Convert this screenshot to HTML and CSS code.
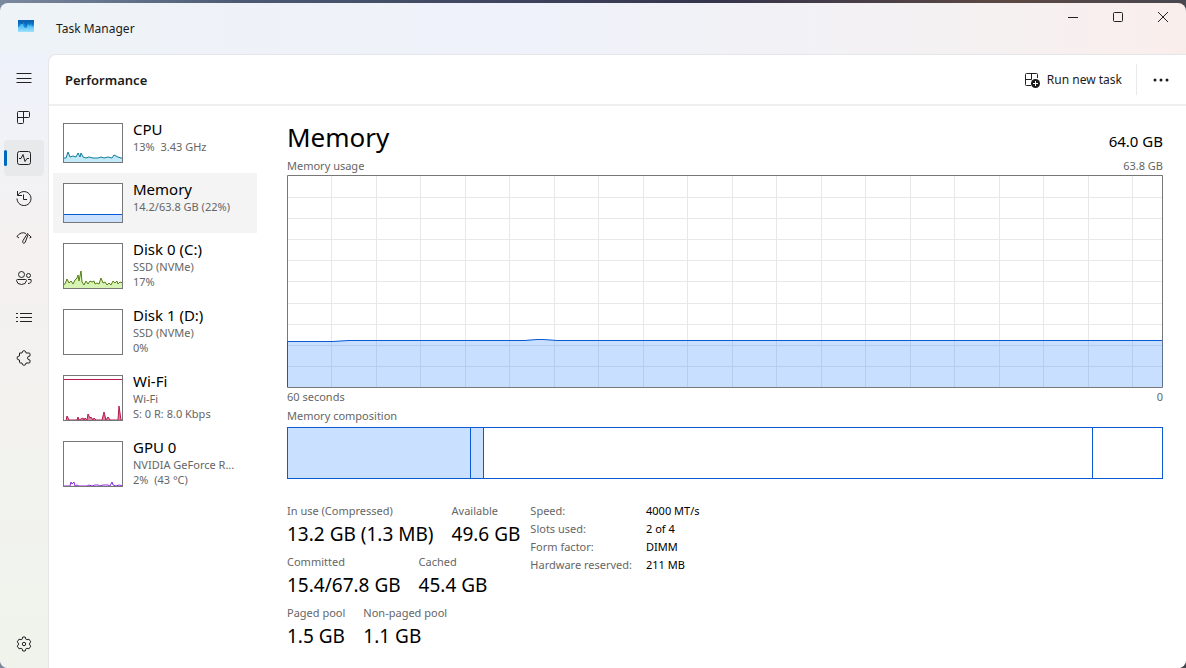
FILE: index.html
```html
<!DOCTYPE html>
<html lang="en">
<head>
<meta charset="utf-8">
<title>Task Manager</title>
<link rel="stylesheet" href="styles.css">
</head>
<body>
<div class="window">
  <header class="titlebar">
    <svg class="app-icon" width="16" height="12" viewBox="0 0 16 12" aria-hidden="true">
      <defs><linearGradient id="sky" x1="0" y1="0" x2="0" y2="1"><stop offset="0" stop-color="#35b3f0"/><stop offset="1" stop-color="#a0e2fd"/></linearGradient></defs>
      <rect width="16" height="12" fill="#0b64b4"/>
      <path d="M0 5 2 3 4 5 5 2 7 4 8 6 10 2 11 5 13 2 14 5 16 2V12H0Z" fill="#1687d4"/>
      <path d="M0 7 2 6 3 4 5 4 6 7 8 8 9 7 10 4 12 6 13 4 14 7 16 5V12H0Z" fill="url(#sky)"/>
    </svg>
    <h1 class="app-name">Task Manager</h1>
    <div class="caption-buttons">
      <button class="caption" aria-label="Minimize"><svg width="12" height="12" viewBox="0 0 12 12"><path d="M1 6.500H11"/></svg></button>
      <button class="caption" aria-label="Maximize"><svg width="12" height="12" viewBox="0 0 12 12"><rect x="1.500" y="1.500" width="9" height="9" rx="1"/></svg></button>
      <button class="caption" aria-label="Close"><svg width="12" height="12" viewBox="0 0 12 12"><path d="M1 1 11 11M11 1 1 11"/></svg></button>
    </div>
  </header>
  <div class="body">
    <nav class="rail" aria-label="Pages">
      <button class="rail-button" aria-label="Open navigation"><svg width="16" height="16" viewBox="0 0 16 16"><path d="M.5 3.500H15.500M.5 8.500H15.500M.5 12.500H15.500"/></svg></button>
      <button class="rail-button" aria-label="Processes"><svg width="16" height="16" viewBox="0 0 16 16"><path d="M2.500 1.500H12.500Q13.500 1.500 13.500 2.500V6.500Q13.500 7.500 12.500 7.500H1.500M7.500 1.500V12.500Q7.500 13.500 6.500 13.500H2.500Q1.500 13.500 1.500 12.500V2.500Q1.500 1.500 2.500 1.500"/></svg></button>
      <button class="rail-button active" aria-label="Performance" aria-current="page"><svg width="16" height="16" viewBox="0 0 16 16"><rect x="1.500" y="1.500" width="13" height="13" rx="2"/><path d="M3 8.500H5L7 4.500 9 11.500 11 8.500H13"/></svg></button>
      <button class="rail-button" aria-label="App history"><svg width="16" height="16" viewBox="0 0 16 16"><path d="M1.500 1V5.500H6M1.800 5.300A7 7 0 1 1 1 8.500M7.500 4.500V9.500H11"/></svg></button>
      <button class="rail-button" aria-label="Startup apps"><svg width="16" height="16" viewBox="0 0 16 16"><path d="M.8 6.600Q5 1 10 3.500M1 6.500 3 8M13 5 15.200 7.200 13.500 8M11.500 3.500 7 10.500Q6 13 7.700 13.300 9.200 13.300 9.700 11L12.300 4Z"/></svg></button>
      <button class="rail-button" aria-label="Users"><svg width="16" height="16" viewBox="0 0 16 16"><circle cx="5.500" cy="4.500" r="3"/><circle cx="12.500" cy="5.500" r="2"/><path d="M1.500 9.500H9.500Q10.500 9.500 10.500 10.500 10 14.500 5.500 14.500 1 14.500.5 10.500.5 9.500 1.500 9.500ZM12 9.500H15Q16 13.500 12 13.500"/></svg></button>
      <button class="rail-button" aria-label="Details"><svg width="16" height="16" viewBox="0 0 16 16"><path d="M4 3.500H16M4 7.500H16M4 11.500H16M0 3.500H2M0 7.500H2M0 11.500H2"/></svg></button>
      <button class="rail-button" aria-label="Services"><svg width="16" height="16" viewBox="0 0 16 16"><path d="M3.500 3H6Q6 .7 8 .7T10 3H13Q14 3 14 4V6Q11.500 6 11.500 8T14 10V12Q14 13 13 13H10Q10 15.300 8 15.300T6 13H4.500Q3.500 13 3.500 12V10Q1 10 1 8T3.500 6Z"/></svg></button>
      <button class="rail-button settings" aria-label="Settings"><svg width="16" height="16" viewBox="0 0 16 16"><path d="M6.800 1H9.200L9.800 3.100 10.900 3.700 13 3.200 14.700 5.800 13.300 8 14.700 10.200 13 12.800 10.900 12.300 9.800 12.900 9.200 15H6.800L6.200 12.900 5.100 12.300 3 12.800 1.300 10.200 2.700 8 1.300 5.800 3 3.200 5.100 3.700 6.200 3.100Z" stroke-linejoin="round"/><circle cx="8" cy="8" r="1.700"/></svg></button>
    </nav>
    <main class="panel">
      <div class="toolbar">
        <h2 class="page-title">Performance</h2>
        <button class="run-task">
          <svg width="16" height="16" viewBox="0 0 16 16"><path d="M7 13.500H2.500Q1.500 13.500 1.500 12.500V2.500Q1.500 1.500 2.500 1.500H12.500Q13.500 1.500 13.500 2.500V6M7.500 1.500V7.500M1.500 7.500H7.500"/><circle class="solid" cx="11.500" cy="11.500" r="4.500"/><path class="plus" d="M11.500 9V14M9 11.500H14"/></svg>
          <span>Run new task</span>
        </button>
        <button class="more" aria-label="See more"><svg width="16" height="4" viewBox="0 0 16 4"><circle cx="2" cy="2" r="1.500"/><circle cx="8" cy="2" r="1.500"/><circle cx="14" cy="2" r="1.500"/></svg></button>
      </div>
      <div class="content">
        <div class="devices">
          <button class="device">
            <svg class="thumb short cpu" viewBox="0 0 60 40"><path d="M0 35H3L5 29 7 34 10 33 13 34 15 30 17 34 18 30 20 34 23 35 26 34 30 35 35 35 38 34 41 35 45 34 49 35 51 32 53 33 55 34 58 35H60V40H0Z"/></svg>
            <span class="device-text"><span class="device-name">CPU</span><span>13%&nbsp; 3.43 GHz</span></span>
          </button>
          <button class="device selected">
            <svg class="thumb short mem" viewBox="0 0 60 40"><path d="M0.500 31.500H60V40H.5Z"/></svg>
            <span class="device-text"><span class="device-name">Memory</span><span>14.2/63.8 GB (22%)</span></span>
          </button>
          <button class="device">
            <svg class="thumb disk" viewBox="0 0 60 46"><path d="M0 42 2 41 4 36 6 40 8 38 10 41 12 37 14 35 15 32 16 38 18 28 19 39 21 42 23 38 25 41 27 38 29 39 31 38 32 41 34 40 36 41 38 35 40 40 42 39 44 42 46 40 48 42 50 38 52 40 54 38 55 41 57 39 60 40V46H0Z"/></svg>
            <span class="device-text"><span class="device-name">Disk 0 (C:)</span><span>SSD (NVMe)</span><span>17%</span></span>
          </button>
          <button class="device">
            <svg class="thumb" viewBox="0 0 60 46"></svg>
            <span class="device-text"><span class="device-name">Disk 1 (D:)</span><span>SSD (NVMe)</span><span>0%</span></span>
          </button>
          <button class="device">
            <svg class="thumb wifi" viewBox="0 0 60 46"><path class="limit" d="M1 4.500H59"/><path class="traffic" d="M0 46H3L4 41 6 45H14L15 42 16 45 18 44 20 43 21 45 22 43 24 45 25 39 27 43 28 42 30 45 31 43 33 45H39L41 37 43 45 45 42 47 45H55L56 31 58 45H60"/></svg>
            <span class="device-text"><span class="device-name">Wi-Fi</span><span>Wi-Fi</span><span>S: 0 R: 8.0 Kbps</span></span>
          </button>
          <button class="device">
            <svg class="thumb gpu" viewBox="0 0 60 46"><path d="M0 45H7L8 41 9 43 11 41 12 45 14 44 16 45H24L26 44 29 45 32 44H35L37 45 40 44H45L47 45 49 41 50 44 53 45 56 44 60 45"/></svg>
            <span class="device-text"><span class="device-name">GPU 0</span><span>NVIDIA GeForce R...</span><span>2%&nbsp; (43 °C)</span></span>
          </button>
        </div>
        <section class="detail">
          <div class="detail-head"><h3 class="detail-title">Memory</h3><span class="capacity">64.0 GB</span></div>
          <div class="axis"><span>Memory usage</span><span>63.8 GB</span></div>
          <svg class="chart" viewBox="0 0 876 213" preserveAspectRatio="none" role="img" aria-label="Memory usage over 60 seconds">
            <path class="grid" d="M44.500 0V213M89.500 0V213M133.500 0V213M178.500 0V213M222.500 0V213M267.500 0V213M311.500 0V213M356.500 0V213M400.500 0V213M445.500 0V213M489.500 0V213M534.500 0V213M578.500 0V213M623.500 0V213M667.500 0V213M712.500 0V213M756.500 0V213M801.500 0V213M845.500 0V213M0 22.500H876M0 43.500H876M0 64.500H876M0 85.500H876M0 106.500H876M0 128.500H876M0 149.500H876M0 170.500H876M0 191.500H876"/>
            <rect class="frame" x=".5" y=".5" width="875" height="212"/>
            <path class="usage-fill" d="M0 166H46L62 165H238L250 164H256L270 165H876V212H0Z"/>
            <path class="usage-line" d="M.5 212V166.500H46L62 165.500H238L250 164.500H256L270 165.500H875"/>
          </svg>
          <div class="axis below"><span>60 seconds</span><span>0</span></div>
          <div class="axis caption-row"><span>Memory composition</span></div>
          <div class="composition" role="img" aria-label="Memory composition"><span class="in-use"></span><span class="modified"></span><span class="standby"></span><span class="free"></span></div>
          <div class="stats">
            <div class="totals">
              <dl class="stat-row"><div><dt>In use (Compressed)</dt><dd>13.2 GB (1.3 MB)</dd></div><div><dt>Available</dt><dd>49.6 GB</dd></div></dl>
              <dl class="stat-row"><div><dt>Committed</dt><dd>15.4/67.8 GB</dd></div><div><dt>Cached</dt><dd>45.4 GB</dd></div></dl>
              <dl class="stat-row"><div><dt>Paged pool</dt><dd>1.5 GB</dd></div><div><dt>Non-paged pool</dt><dd>1.1 GB</dd></div></dl>
            </div>
            <dl class="facts">
              <dt>Speed:</dt><dd>4000 MT/s</dd>
              <dt>Slots used:</dt><dd>2 of 4</dd>
              <dt>Form factor:</dt><dd>DIMM</dd>
              <dt>Hardware reserved:</dt><dd>211 MB</dd>
            </dl>
          </div>
        </section>
      </div>
    </main>
  </div>
</div>
</body>
</html>
```
FILE: styles.css
```css
* { box-sizing: border-box; }
body, h1, h2, h3, dl, dd { margin: 0; }
body {
  min-height: 100vh;
  display: flex;
  padding-top: 3px;
  background: linear-gradient(90deg, #7b899f, #4c5a74 20%, #35354c 60%, #5b4843 85%, #47474f);
  font: 11px/16px "Noto Sans", "Open Sans", sans-serif;
  color: #1b1b1b;
}
button { border: 0; padding: 0; background: none; font: inherit; color: inherit; }
svg { display: block; fill: none; stroke: #222; }
.window {
  flex: 1;
  min-width: 0;
  display: flex;
  flex-direction: column;
  border-radius: 8px;
  overflow: hidden;
  background: linear-gradient(90deg, #eef3f7, #eff2fa 45%, #f4f1f2 80%, #faeeec);
}
.titlebar { display: flex; align-items: center; height: 51px; padding: 0 1px 0 18px; }
.app-icon { stroke: none; margin-bottom: 6px; }
.app-name { flex: 1; margin-left: 22px; font-size: 12px; line-height: 16px; font-weight: 400; }
.caption-buttons { display: flex; align-self: flex-start; }
.caption { width: 45px; height: 28px; display: grid; place-items: center; }
.body { flex: 1; display: flex; }
.rail {
  width: 48px;
  display: flex;
  flex-direction: column;
  gap: 4px;
  padding: 6px 4px;
  background: linear-gradient(180deg, #eef2fa, #f1f2f7 15%, #f4f1f0 30%, #f3f2ef 55%, #f0f3ec);
}
.rail-button { height: 36px; display: grid; place-items: center; border-radius: 4px; }
.rail-button.active { position: relative; background: #e8e9eb; }
.rail-button.active::before {
  content: "";
  position: absolute;
  left: 0;
  top: 10px;
  width: 3px;
  height: 16px;
  border-radius: 2px;
  background: #0067c0;
}
.settings { margin-top: auto; }
.panel {
  flex: 1;
  min-width: 0;
  border: 1px solid #e4e6ea;
  border-width: 1px 0 0 1px;
  border-radius: 8px 0 0 0;
  background: #fff;
}
.toolbar { display: flex; align-items: center; height: 51px; padding: 0 1px 0 16px; border-bottom: 2px solid #efefef; }
.page-title { flex: 1; font-size: 13px; font-weight: 600; }
.run-task { display: flex; align-items: center; gap: 7px; padding-right: 14px; font-size: 12px; line-height: 31px; border-right: 1px solid #e9e9e9; }
.solid { fill: #1b1b1b; stroke: none; }
.plus { stroke: #fff; }
.more { width: 48px; height: 32px; display: grid; place-items: center; }
.more svg { fill: #1b1b1b; stroke: none; }
.content { display: flex; padding: 7px 23px 0 4px; }
.devices { flex: 0 0 204px; line-height: 15px; color: #666; }
.device { display: flex; gap: 10px; width: 100%; height: 66px; padding: 6px 10px; text-align: left; }
.device:nth-child(-n+2) { height: 60px; }
.device.selected { background: #f4f4f4; }
.thumb { width: 60px; height: 46px; margin-top: 4px; outline: 1px solid #777; outline-offset: -1px; background: #fff; }
.thumb.short { height: 40px; }
.cpu { fill: #c2e9f7; stroke: #117d9b; }
.mem { fill: #cae0ff; stroke: #0a5bd3; }
.disk { fill: #d8f4b4; stroke: #557f15; }
.wifi { stroke: #b5194f; }
.traffic { fill: #d9809f; }
.gpu { stroke: #8a2be2; }
.device-text { display: flex; flex-direction: column; white-space: nowrap; }
.device-name { font-size: 15px; line-height: 20px; color: #000; }
.detail { flex: 1; min-width: 0; padding: 4px 0 0 30px; }
.detail-head { display: flex; justify-content: space-between; align-items: baseline; color: #000; }
.detail-title { font-size: 26px; line-height: 40px; font-weight: 400; }
.capacity { font-size: 15px; }
.axis { display: flex; justify-content: space-between; line-height: 18px; color: #666; }
.chart { width: 100%; height: 213px; }
.chart path, .chart rect { vector-effect: non-scaling-stroke; }
.grid { stroke: #e8e8e8; }
.frame { stroke: #777; }
.usage-fill { fill: #0a6cff; fill-opacity: .22; stroke: none; }
.usage-line { stroke: #0a5bd3; }
.below { margin-bottom: 1px; }
.caption-row { margin-bottom: 2px; }
.composition { display: flex; height: 52px; border: 1px solid #0a5bd3; }
.composition span + span { border-left: 1px solid #0a5bd3; }
.in-use { flex: 183; background: #cae0ff; }
.modified { flex: 12; background: #cae0ff; }
.standby { flex: 610; }
.free { flex: 69; }
.stats { display: flex; gap: 10px; margin-top: 23px; line-height: 18px; white-space: nowrap; }
.stats dt { color: #666; }
.stats dd { color: #000; }
.stat-row { display: flex; gap: 18px; margin-bottom: 5px; }
.stat-row dd { font-size: 19px; line-height: 28px; }
.facts { display: grid; grid-template-columns: auto auto; column-gap: 14px; align-content: start; }
```
